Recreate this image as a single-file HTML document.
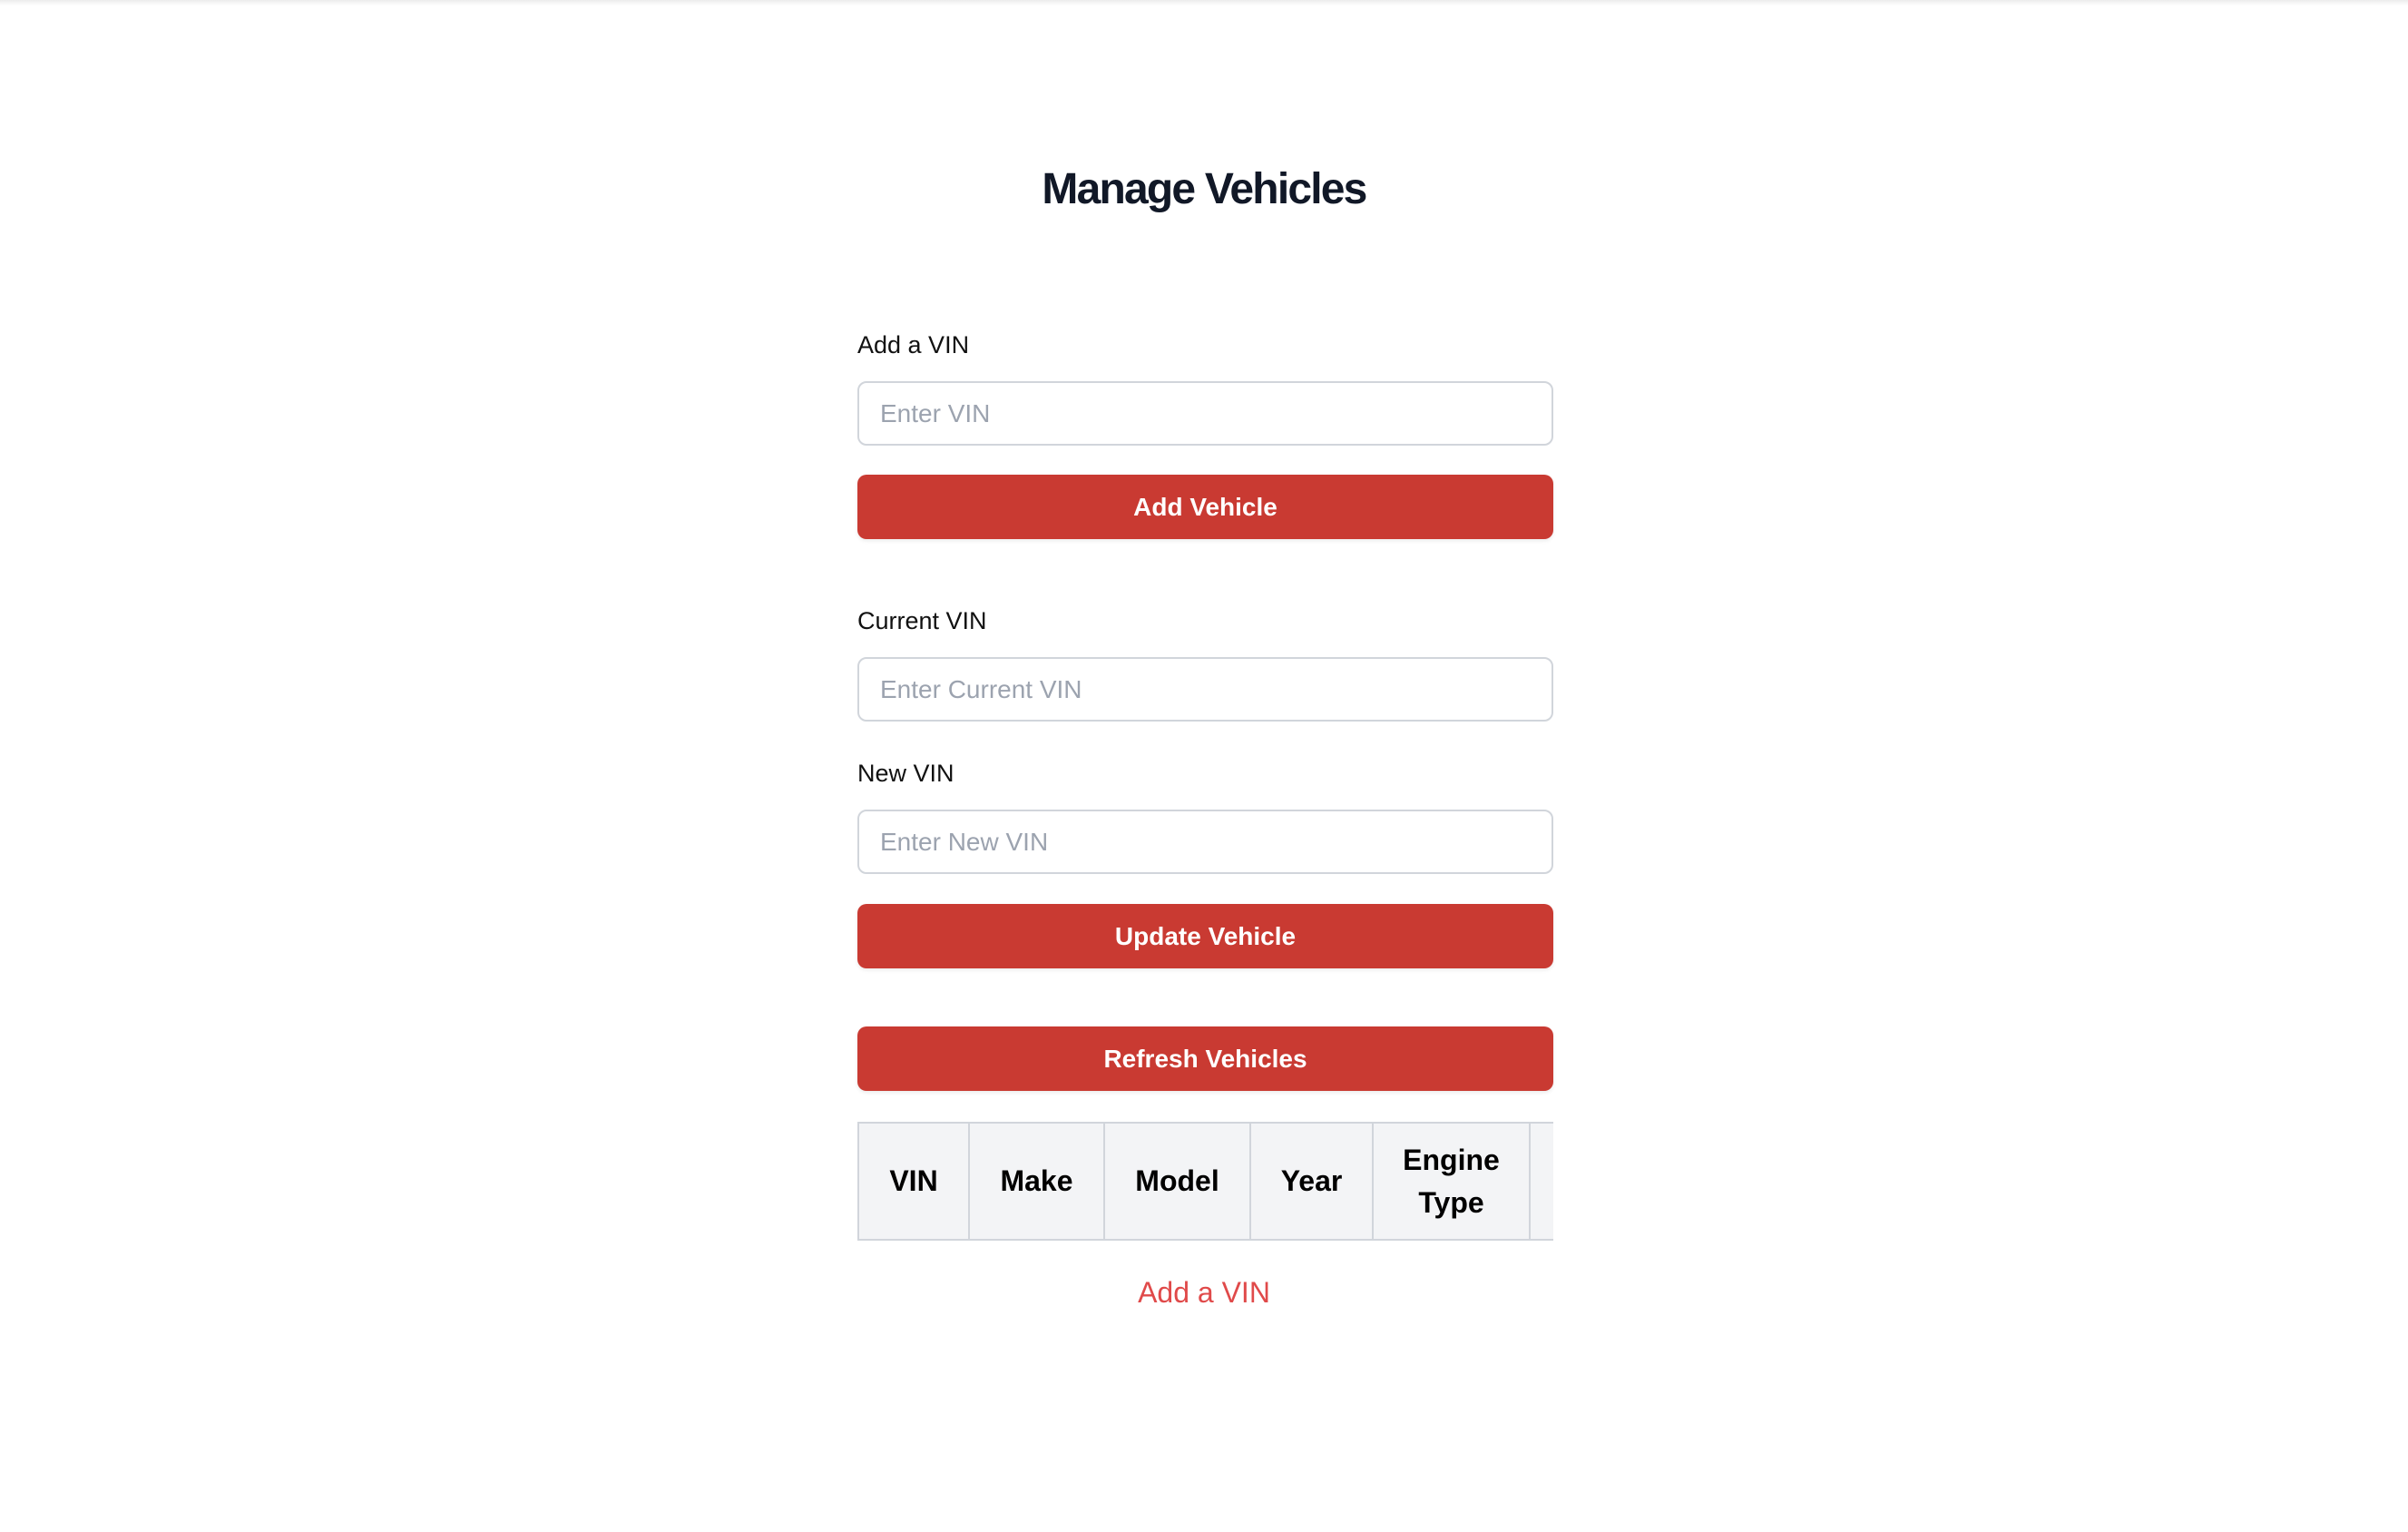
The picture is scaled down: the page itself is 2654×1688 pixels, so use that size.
<!DOCTYPE html>
<html><head><meta charset="utf-8"><style>
*{box-sizing:border-box;margin:0;padding:0}
html,body{width:2654px;height:1688px;background:#fff;overflow:hidden;font-family:"Liberation Sans",sans-serif;position:relative}
.top{position:absolute;left:0;top:0;width:100%;height:6px;background:linear-gradient(#ececec,#fff)}
h1{position:absolute;left:0;width:100%;top:181px;text-align:center;font-size:48px;font-weight:bold;color:#111827;letter-spacing:-1.8px}
.lbl{position:absolute;left:945px;font-size:27px;color:#111;}
.inp{position:absolute;left:945px;width:767px;height:71px;border:2px solid #d1d5db;border-radius:10px;font-size:28px;color:#9ca3af;padding-left:23px;line-height:67px}
.btn{position:absolute;left:945px;width:767px;height:71px;background:#c93a32;border-radius:10px;color:#fff;font-weight:bold;font-size:28px;text-align:center;line-height:71px;box-shadow:0 2px 4px rgba(0,0,0,.08)}
.wrap{position:absolute;left:945px;top:1236px;width:767px;height:131px;overflow:hidden}
table{position:absolute;left:0;top:0;border-collapse:collapse;background:#f3f4f6;table-layout:fixed;width:890px}
th{border:2px solid #d1d5db;height:129px;font-size:32px;font-weight:bold;color:#000;text-align:center;line-height:47px;padding:0}
.link{position:absolute;left:0;width:100%;top:1406px;text-align:center;font-size:32px;color:#e04a4a}
</style></head><body>
<div class="top"></div>
<h1>Manage Vehicles</h1>
<div class="lbl" style="top:365px">Add a VIN</div>
<div class="inp" style="top:420px">Enter VIN</div>
<div class="btn" style="top:523px">Add Vehicle</div>
<div class="lbl" style="top:669px">Current VIN</div>
<div class="inp" style="top:724px">Enter Current VIN</div>
<div class="lbl" style="top:837px">New VIN</div>
<div class="inp" style="top:892px">Enter New VIN</div>
<div class="btn" style="top:996px">Update Vehicle</div>
<div class="btn" style="top:1131px">Refresh Vehicles</div>
<div class="wrap"><table><colgroup><col style="width:122px"><col style="width:149px"><col style="width:161px"><col style="width:135px"><col style="width:173px"><col style="width:150px"></colgroup><tr>
<th>VIN</th><th>Make</th><th>Model</th><th>Year</th><th>Engine<br>Type</th><th></th>
</tr></table></div>
<div class="link">Add a VIN</div>
</body></html>
